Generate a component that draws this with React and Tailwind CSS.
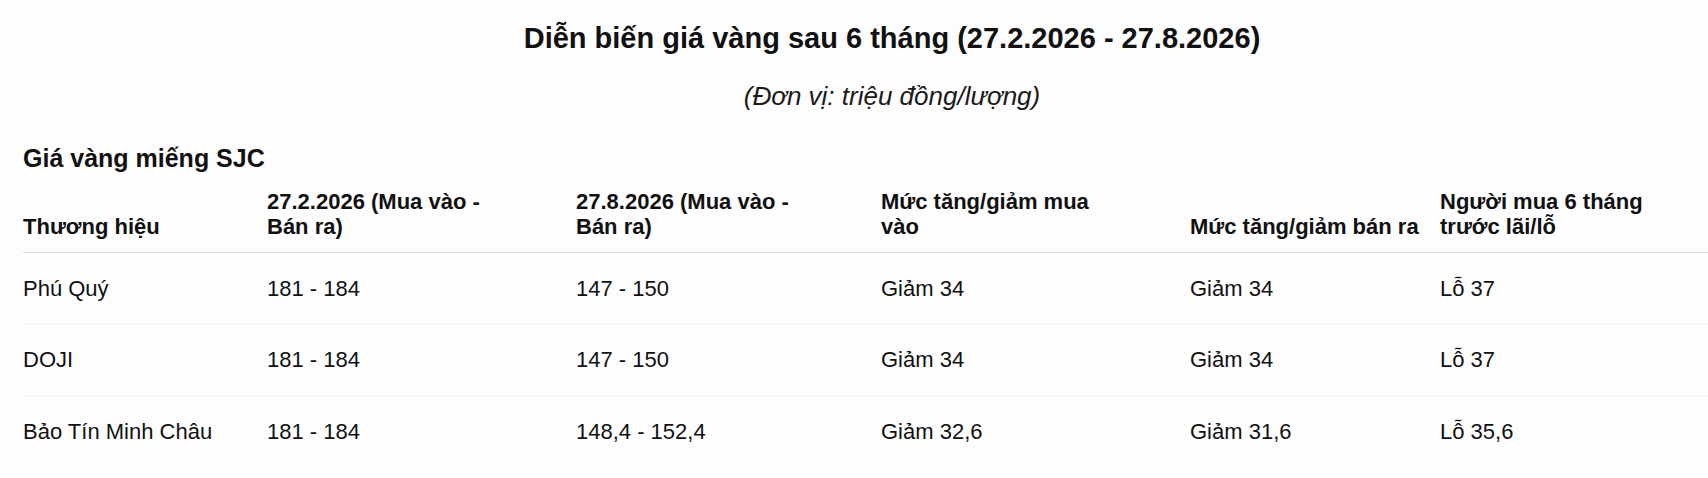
const headers = [
  { label: "Thương hiệu", w: "w-[244px]", pr: "pr-[20px]" },
  { label: "27.2.2026 (Mua vào - Bán ra)", w: "w-[309px]", pr: "pr-[60px]" },
  { label: "27.8.2026 (Mua vào - Bán ra)", w: "w-[305px]", pr: "pr-[60px]" },
  { label: "Mức tăng/giảm mua vào", w: "w-[309px]", pr: "pr-[70px]" },
  { label: "Mức tăng/giảm bán ra", w: "w-[250px]", pr: "pr-[10px]" },
  { label: "Người mua 6 tháng trước lãi/lỗ", w: "w-[321px]", pr: "pr-[80px]" },
];

const rows = [
  ["Phú Quý", "181 - 184", "147 - 150", "Giảm 34", "Giảm 34", "Lỗ 37"],
  ["DOJI", "181 - 184", "147 - 150", "Giảm 34", "Giảm 34", "Lỗ 37"],
  ["Bảo Tín Minh Châu", "181 - 184", "148,4 - 152,4", "Giảm 32,6", "Giảm 31,6", "Lỗ 35,6"],
];

export default function App() {
  return (
    <div className="w-full h-[478px] overflow-hidden bg-[#fdfdfd] text-[#111111] font-['Liberation_Sans',Arial,sans-serif]">
      <div className="w-[1784px] px-[23px]">
        {/* ---------- TIÊU ĐỀ ---------- */}
        <h1 className="pt-[20px] text-center text-[29px] leading-[36px] font-bold">
          Diễn biến giá vàng sau 6 tháng (27.2.2026 - 27.8.2026)
        </h1>
        <p className="mt-[24px] text-center text-[26px] leading-[32px] italic text-[#1a1a1a]">
          (Đơn vị: triệu đồng/lượng)
        </p>

        {/* ---------- BẢNG SJC ---------- */}
        <h2 className="mt-[31px] text-[25px] leading-[30px] font-bold">Giá vàng miếng SJC</h2>

        <table className="w-[1738px] table-fixed border-collapse text-[22px]">
          <thead>
            <tr className="border-b border-[#dedede]">
              {headers.map((h) => (
                <th
                  key={h.label}
                  className={`${h.w} ${h.pr} pt-[16px] pb-[13px] text-left align-bottom font-bold leading-[25px]`}
                >
                  {h.label}
                </th>
              ))}
            </tr>
          </thead>
          <tbody>
            {rows.map((r, i) => (
              <tr key={i} className={i < rows.length - 1 ? "border-b border-[#f3f3f3]" : ""}>
                {r.map((c, j) => (
                  <td key={j} className="pt-[23px] pb-[21px] leading-[26.4px] align-middle">
                    {c}
                  </td>
                ))}
              </tr>
            ))}
          </tbody>
        </table>
      </div>
    </div>
  );
}
